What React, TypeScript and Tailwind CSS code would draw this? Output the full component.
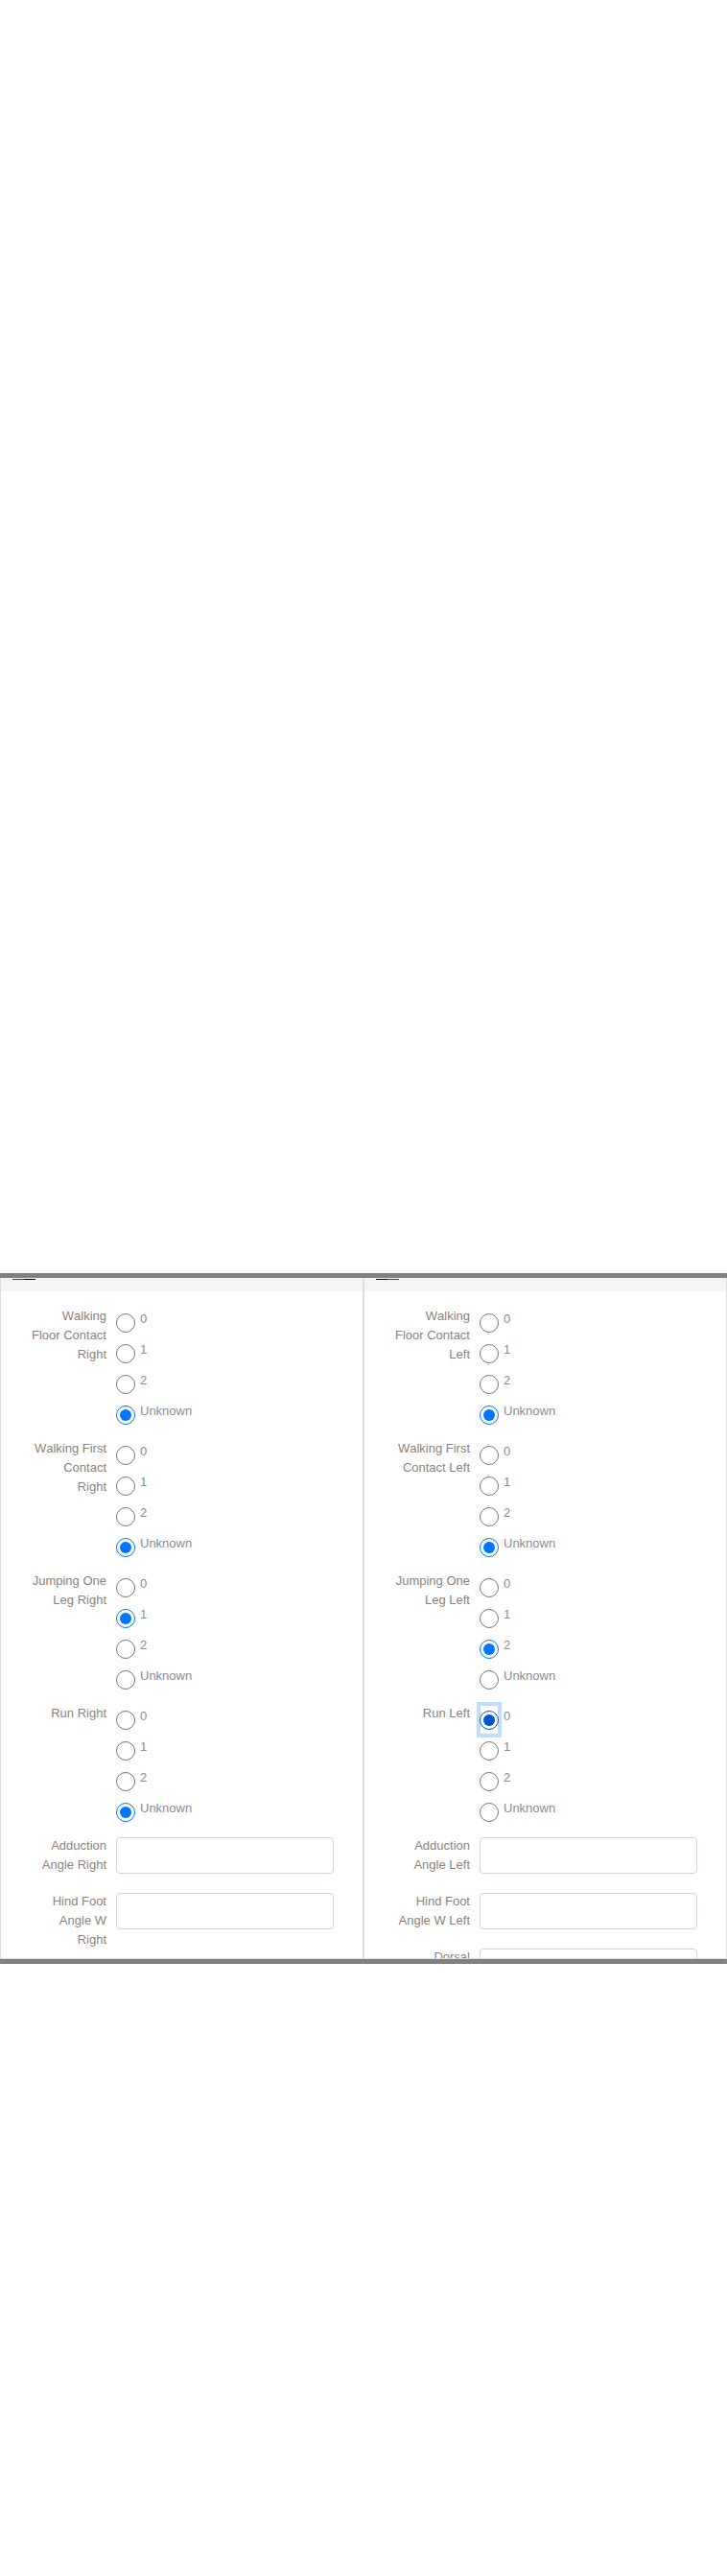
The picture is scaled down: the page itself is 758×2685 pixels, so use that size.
import React from "react";

type Row =
  | { kind: "radio"; label: string; name: string; checked: string; focused?: boolean }
  | { kind: "input"; label: string };

const OPTIONS = ["0", "1", "2", "Unknown"];

const leftRows: Row[] = [
  { kind: "radio", label: "Walking Floor Contact Right", name: "wfcr", checked: "Unknown" },
  { kind: "radio", label: "Walking First Contact Right", name: "wfir", checked: "Unknown" },
  { kind: "radio", label: "Jumping One Leg Right", name: "jolr", checked: "1" },
  { kind: "radio", label: "Run Right", name: "rr", checked: "Unknown" },
  { kind: "input", label: "Adduction Angle Right" },
  { kind: "input", label: "Hind Foot Angle W Right" },
  { kind: "input", label: "Dorsal Flexion Right" },
];

const rightRows: Row[] = [
  { kind: "radio", label: "Walking Floor Contact Left", name: "wfcl", checked: "Unknown" },
  { kind: "radio", label: "Walking First Contact Left", name: "wfil", checked: "Unknown" },
  { kind: "radio", label: "Jumping One Leg Left", name: "joll", checked: "2" },
  { kind: "radio", label: "Run Left", name: "rl", checked: "0", focused: true },
  { kind: "input", label: "Adduction Angle Left" },
  { kind: "input", label: "Hind Foot Angle W Left" },
  { kind: "input", label: "Dorsal Flexion Left" },
];

const labelCls =
  "w-[78.5px] shrink-0 text-right leading-5 text-[#8c8279] [font-kerning:none]";

function RadioRow({ row }: { row: Extract<Row, { kind: "radio" }> }) {
  return (
    <div className="mb-[15px] flex gap-[10px]">
      <div className={labelCls}>{row.label}</div>
      <div className="flex flex-1 flex-col gap-2 pt-[3px]">
        {OPTIONS.map((opt, i) => {
          const isChecked = opt === row.checked;
          const focus = row.focused && i === 0;
          return (
            <div key={opt} className="flex items-start">
              <div className="relative mt-1 h-5 w-5 shrink-0">
                {focus && (
                  <div className="absolute -left-[3px] -top-[9px] h-[37px] w-[26px] border-4 border-[#c3dcfc]" />
                )}
                <input
                  type="radio"
                  name={row.name}
                  defaultChecked={isChecked}
                  className={
                    focus
                      ? "relative m-0 block h-5 w-5 accent-[#0056cc]"
                      : "relative m-0 block h-5 w-5"
                  }
                />
              </div>
              <span className="ml-[5px] leading-5 text-[#898c93]">{opt}</span>
            </div>
          );
        })}
      </div>
    </div>
  );
}

function InputRow({ row }: { row: Extract<Row, { kind: "input" }> }) {
  return (
    <div className="mb-[18px] flex gap-[10px]">
      <div className={labelCls}>{row.label}</div>
      <div className="flex-1 pt-px">
        <input
          type="text"
          className="block h-[38px] w-full rounded-[4px] border border-[#ced4da] bg-white px-3 outline-none"
        />
      </div>
    </div>
  );
}

function Panel({ rows, tabs }: { rows: Row[]; tabs: [string, string] }) {
  return (
    <div className="flex w-1/2 flex-col border-x border-[#dddddd]">
      <div className="h-[14px] shrink-0 bg-[#f5f5f5] pl-3 pt-px">
        <div className="flex">
          <div className={`h-px w-3 ${tabs[0]}`} />
          <div className={`h-px w-3 ${tabs[1]}`} />
        </div>
      </div>
      <div className="pl-[31.5px] pr-[30px] pt-4">
        {rows.map((r, i) =>
          r.kind === "radio" ? <RadioRow key={i} row={r} /> : <InputRow key={i} row={r} />
        )}
      </div>
    </div>
  );
}

export default function App() {
  return (
    <div
      className="bg-white pt-[1327px] text-[13px]"
      style={{ fontFamily: '"Liberation Sans", Arial, sans-serif' }}
    >
      <div className="border-y-[5px] border-[#808080]">
        <div className="flex h-[709px] overflow-hidden">
          <Panel rows={leftRows} tabs={["bg-[#e00000]", "bg-black"]} />
          <Panel rows={rightRows} tabs={["bg-black", "bg-[#e00000]"]} />
        </div>
        <div className="h-px bg-[#dddddd]" />
      </div>
    </div>
  );
}
